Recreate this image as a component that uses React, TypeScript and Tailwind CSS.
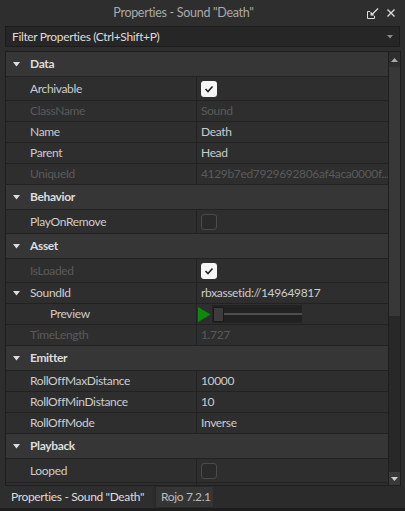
import React from "react";

type Row =
  | { kind: "header"; label: string }
  | { kind: "prop"; label: string; value?: string; disabled?: boolean; check?: boolean; checked?: boolean; expand?: boolean; child?: boolean; preview?: boolean };

const rows: Row[] = [
  { kind: "header", label: "Data" },
  { kind: "prop", label: "Archivable", check: true, checked: true },
  { kind: "prop", label: "ClassName", value: "Sound", disabled: true },
  { kind: "prop", label: "Name", value: "Death" },
  { kind: "prop", label: "Parent", value: "Head" },
  { kind: "prop", label: "UniqueId", value: "4129b7ed7929692806af4aca0000f...", disabled: true },
  { kind: "header", label: "Behavior" },
  { kind: "prop", label: "PlayOnRemove", check: true, checked: false },
  { kind: "header", label: "Asset" },
  { kind: "prop", label: "IsLoaded", check: true, checked: true, disabled: true },
  { kind: "prop", label: "SoundId", value: "rbxassetid://149649817", expand: true },
  { kind: "prop", label: "Preview", child: true, preview: true },
  { kind: "prop", label: "TimeLength", value: "1.727", disabled: true },
  { kind: "header", label: "Emitter" },
  { kind: "prop", label: "RollOffMaxDistance", value: "10000" },
  { kind: "prop", label: "RollOffMinDistance", value: "10" },
  { kind: "prop", label: "RollOffMode", value: "Inverse" },
  { kind: "header", label: "Playback" },
  { kind: "prop", label: "Looped", check: true, checked: false },
];

function Tri({ color = "#dddddd" }: { color?: string }) {
  return (
    <svg width="7" height="5" viewBox="0 0 7 5" className="block">
      <path d="M0 0 L7 0 L3.5 4.5 Z" fill={color} />
    </svg>
  );
}

function CheckBox({ checked }: { checked: boolean }) {
  if (checked) {
    return (
      <div className="w-[16px] h-[16px] rounded-[3px] bg-[#f5f5f5] flex items-center justify-center">
        <svg width="10" height="8" viewBox="0 0 10 8">
          <path d="M1.5 4 L4 6.5 L8.5 1.5" stroke="#222" strokeWidth="1.6" fill="none" />
        </svg>
      </div>
    );
  }
  return <div className="w-[16px] h-[16px] rounded-[3px] border border-[#4a4a4a] bg-[#2a2a2a]" />;
}

function RowView({ r }: { r: Row }) {
  if (r.kind === "header") {
    return (
      <div className="h-[25px] shrink-0 bg-[#363636] border-b border-[#222222] flex items-center">
        <div className="w-[24px] pl-[7px] flex items-center">
          <Tri />
        </div>
        <span className="font-bold text-[#dddddd]">{r.label}</span>
      </div>
    );
  }
  const h = r.check ? "h-[24px]" : "h-[21px]";
  const tc = r.disabled ? "text-[#5a5a5a]" : "text-[#cccccc]";
  return (
    <div className={`${h} shrink-0 bg-[#2e2e2e] border-b border-[#222222] flex`}>
      <div className={`w-[191px] shrink-0 border-r border-[#222222] flex items-center ${r.child ? "pl-[44px]" : "pl-[24px]"} relative`}>
        {r.expand && (
          <div className="absolute left-[7px] top-[8px]">
            <Tri />
          </div>
        )}
        <span className={tc}>{r.label}</span>
      </div>
      <div className="flex-1 min-w-0 flex items-center pl-[4px] overflow-hidden whitespace-nowrap">
        {r.check ? (
          <CheckBox checked={!!r.checked} />
        ) : r.preview ? (
          <div className="flex items-center -ml-[3px]">
            <svg width="13" height="15" viewBox="0 0 13 15" className="block">
              <path d="M0 0 L12.5 7.5 L0 15 Z" fill="#0c8a0c" />
            </svg>
            <div className="ml-[1px] w-[90px] h-[18px] bg-[#222222] flex items-center pl-[1px]">
              <div className="w-[11px] h-[15px] bg-[#3c3c3c] border border-[#1a1a1a] rounded-[1px]" />
              <div className="flex-1 h-[2px] bg-[#4e4e4e]" />
            </div>
          </div>
        ) : (
          <span className={tc}>{r.value}</span>
        )}
      </div>
    </div>
  );
}

export default function App() {
  return (
    <div className="w-[405px] h-[511px] bg-[#2e2e2e] flex flex-col overflow-hidden font-['Lato','Noto_Sans',sans-serif] text-[12px] tracking-[-0.35px] leading-none select-none">
      {/* Title bar */}
      <div className="h-[26px] shrink-0 flex items-center">
        <div className="flex-1 text-center text-[#aaaaaa] text-[12.5px] tracking-[-0.3px] whitespace-nowrap">Properties - Sound "Death"</div>
        <div className="w-[38px] flex items-center gap-[8px] pr-[10px]">
          <svg width="12" height="11" viewBox="0 0 12 11" className="block">
            <path d="M0.5 3.5 V10.5 H7.5 V8" stroke="#dddddd" strokeWidth="1" fill="none" />
            <path d="M0.5 3.5 H3" stroke="#dddddd" strokeWidth="1" fill="none" />
            <path d="M11 0.5 L4.5 7" stroke="#dddddd" strokeWidth="1.3" fill="none" />
            <path d="M3.5 3.5 V7.5 H7.5 Z" fill="#dddddd" />
          </svg>
          <svg width="8" height="8" viewBox="0 0 8 8" className="block">
            <path d="M0.5 0.5 L7.5 7.5 M7.5 0.5 L0.5 7.5" stroke="#dddddd" strokeWidth="1.3" fill="none" />
          </svg>
        </div>
      </div>
      {/* Filter */}
      <div className="mx-[5px] h-[21px] shrink-0 border border-[#1c1c1c] bg-[#262626] flex items-center pl-[6px] pr-[6px]">
        <span className="flex-1 text-[#dddddd] whitespace-nowrap">Filter Properties (Ctrl+Shift+P)</span>
        <svg width="6" height="4" viewBox="0 0 6 4" className="block">
          <path d="M0 0 L6 0 L3 3.5 Z" fill="#8a8a8a" />
        </svg>
      </div>
      {/* Grid */}
      <div className="mt-[4px] ml-[5px] mr-[4px] h-[435px] shrink-0 border border-[#1e1e1e] flex">
        <div className="flex-1 min-w-0 flex flex-col overflow-hidden">
          {rows.map((r, i) => (
            <RowView key={i} r={r} />
          ))}
          <div className="h-[3px] shrink-0 flex">
            <div className="w-[191px] border-r border-[#222222]" />
          </div>
        </div>
        <div className="w-[12px] shrink-0 bg-[#282828] border-l border-[#1e1e1e] flex flex-col">
          <div className="h-[15px] shrink-0 bg-[#2f2f2f] flex items-center justify-center">
            <svg width="7" height="4" viewBox="0 0 7 4" className="block">
              <path d="M0 4 L7 4 L3.5 0 Z" fill="#aaaaaa" />
            </svg>
          </div>
          <div className="h-[249px] shrink-0 bg-[#383838]" />
          <div className="flex-1" />
          <div className="h-[13px] shrink-0 bg-[#3a3a3a] flex items-center justify-center">
            <svg width="7" height="4" viewBox="0 0 7 4" className="block">
              <path d="M0 0 L7 0 L3.5 4 Z" fill="#cccccc" />
            </svg>
          </div>
        </div>
      </div>
      {/* Bottom tabs */}
      <div className="flex-1 flex items-stretch bg-[#2b2b2b] border-b-[3px] border-[#1e1e1e] whitespace-nowrap">
        <div className="w-[153px] shrink-0 bg-[#2e2e2e] flex items-center pl-[11px] text-[#dddddd]">Properties - Sound "Death"</div>
        <div className="ml-[2px] w-[59px] shrink-0 bg-[#353535] border border-[#2a2a2a] flex items-center pl-[5px] text-[#bbbbbb]">Rojo 7.2.1</div>
      </div>
    </div>
  );
}
